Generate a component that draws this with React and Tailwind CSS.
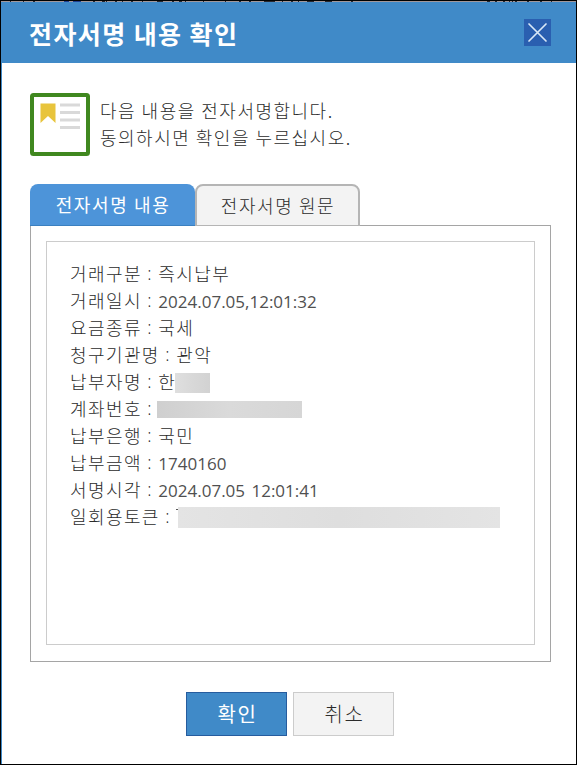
const rows = [
  { label: '거래구분', text: '즉시납부' },
  { label: '거래일시', number: '2024.07.05,12:01:32' },
  { label: '요금종류', text: '국세' },
  { label: '청구기관명', text: '관악' },
  { label: '납부자명', text: '한', mask: '-ml-px w-[35px] h-5 mt-[5px] from-[#dfdfdf] via-[#d8d8d8] to-[#d2d2d2]' },
  { label: '계좌번호', mask: '-ml-px w-[145px] h-[17px] mt-1.5 from-[#cfcfcf] via-[#dadada] to-[#d6d6d6]' },
  { label: '납부은행', text: '국민' },
  { label: '납부금액', number: '1740160' },
  { label: '서명시각', number: '2024.07.05 12:01:41' },
  { label: '일회용토큰', tick: true, mask: 'w-[322px] h-[21px] mt-1 from-[#e4e4e4] via-[#dedede] to-[#e4e4e4]' },
];

const marks = [
  [64, 5, '#1f3f8f'], [73, 8, '#1f3f8f'], [10, 1], [23, 1], [33, 2], [93, 2], [102, 3], [106, 1],
  [115, 2], [122, 1], [131, 2], [142, 1], [157, 6], [172, 2], [179, 3], [185, 1], [203, 1],
  [225, 1], [239, 2], [249, 2], [264, 11], [282, 1], [291, 2], [298, 1], [307, 7], [325, 7],
  [351, 2], [487, 3], [495, 2], [503, 2], [509, 1], [512, 1], [515, 2], [527, 2], [540, 2], [551, 1],
];

function Row({ label, text, number, mask, tick }) {
  return (
    <div className="flex h-[27px] whitespace-pre leading-[27px]">
      <span className="tracking-[1.4px]">{label}</span>
      <span className="w-[16.5px] shrink-0 pl-[5.5px] font-['Open_Sans']">:</span>
      {text && <span className="tracking-[1.4px]">{text}</span>}
      {number && <span className="pt-px font-['Open_Sans'] text-[17px] font-normal text-[#505050] [word-spacing:2px]">{number}</span>}
      {tick && <span className="mt-[6px] h-px w-[2px] bg-[#555]" />}
      {mask && <span className={`shrink-0 bg-gradient-to-r ${mask}`} />}
    </div>
  );
}

export default function App() {
  return (
    <div className="flex h-[765px] w-[577px] flex-col border border-black bg-white font-['Noto_Sans_CJK_KR',sans-serif] text-[18px] font-light text-[#2b2b2b]">
      <svg className="block h-px w-full shrink-0" viewBox="1 0 575 1" shapeRendering="crispEdges">
        <rect x="1" width="575" height="1" fill="#a0979b" />
        {marks.map(([x, w, c]) => <rect key={x} x={x} width={w} height="1" fill={c || '#28282e'} />)}
      </svg>
      <header className="flex h-[61px] shrink-0 items-center justify-between bg-[#408ac8] pr-[25px] pl-7">
        <h1 className="text-[25px] leading-[36px] font-bold tracking-[1.4px] text-white">전자서명 내용 확인</h1>
        <button className="flex size-[27px] items-center justify-center bg-[#2a5fb0]">
          <svg width="27" height="27" viewBox="0 0 27 27" stroke="#d9e8f7" strokeWidth="1.7" strokeLinecap="round">
            <path d="M5 5L22 22M22 5L5 22" />
          </svg>
        </button>
      </header>
      <main className="flex flex-1 flex-col border-l border-[#408ac8] pr-[25px] pl-[28px] pt-[30px]">
        <div className="flex h-[63px]">
          <svg width="60" height="63" viewBox="0 0 60 63" className="shrink-0">
            <rect x="2" y="2" width="56" height="59" rx="1.5" fill="#fff" stroke="#40881f" strokeWidth="4" />
            <path d="M10.5 10.5h15v19.500l-7.500-7-7.500 7z" fill="#e8c43c" />
            <path d="M30 12h20M30 19.500h20M30 27h20M30 34.500h20" stroke="#d9d9d9" strokeWidth="3" />
          </svg>
          <p className="mt-1 ml-2.5 leading-[27px] tracking-[1.5px] whitespace-pre">다음 내용을 전자서명합니다.{'\n'}동의하시면 확인을 누르십시오.</p>
        </div>
        <div className="mt-7 flex h-[42px]">
          <button className="w-[165px] rounded-t-[8px] border-b border-[#3b80c0] bg-[#4d94d9] pl-px font-normal tracking-[1.6px] text-white">전자서명 내용</button>
          <button className="w-[165px] rounded-t-[8px] border-2 border-b border-[#b5b5b5] bg-[#f3f3f3] pl-px tracking-[1.6px]">전자서명 원문</button>
          <div className="flex-1 border-b border-[#a5a5a5]" />
        </div>
        <section className="h-[436px] w-[521px] border border-t-0 border-[#a5a5a5] p-[15px]">
          <div className="h-[404px] border border-[#ccc] pt-[18px] pl-[23px]">
            {rows.map((r) => <Row key={r.label} {...r} />)}
          </div>
        </section>
        <div className="mt-[30px] flex gap-1.5 pl-[156px]">
          <button className="h-11 w-[101px] border border-[#265c9e] bg-[#408ac8] pl-0.5 text-[20px] font-normal tracking-[1.5px] text-white">확인</button>
          <button className="h-11 w-[101px] border border-[#ccc] bg-[#f3f3f3] pl-0.5 text-[20px] tracking-[1.5px]">취소</button>
        </div>
      </main>
    </div>
  );
}
